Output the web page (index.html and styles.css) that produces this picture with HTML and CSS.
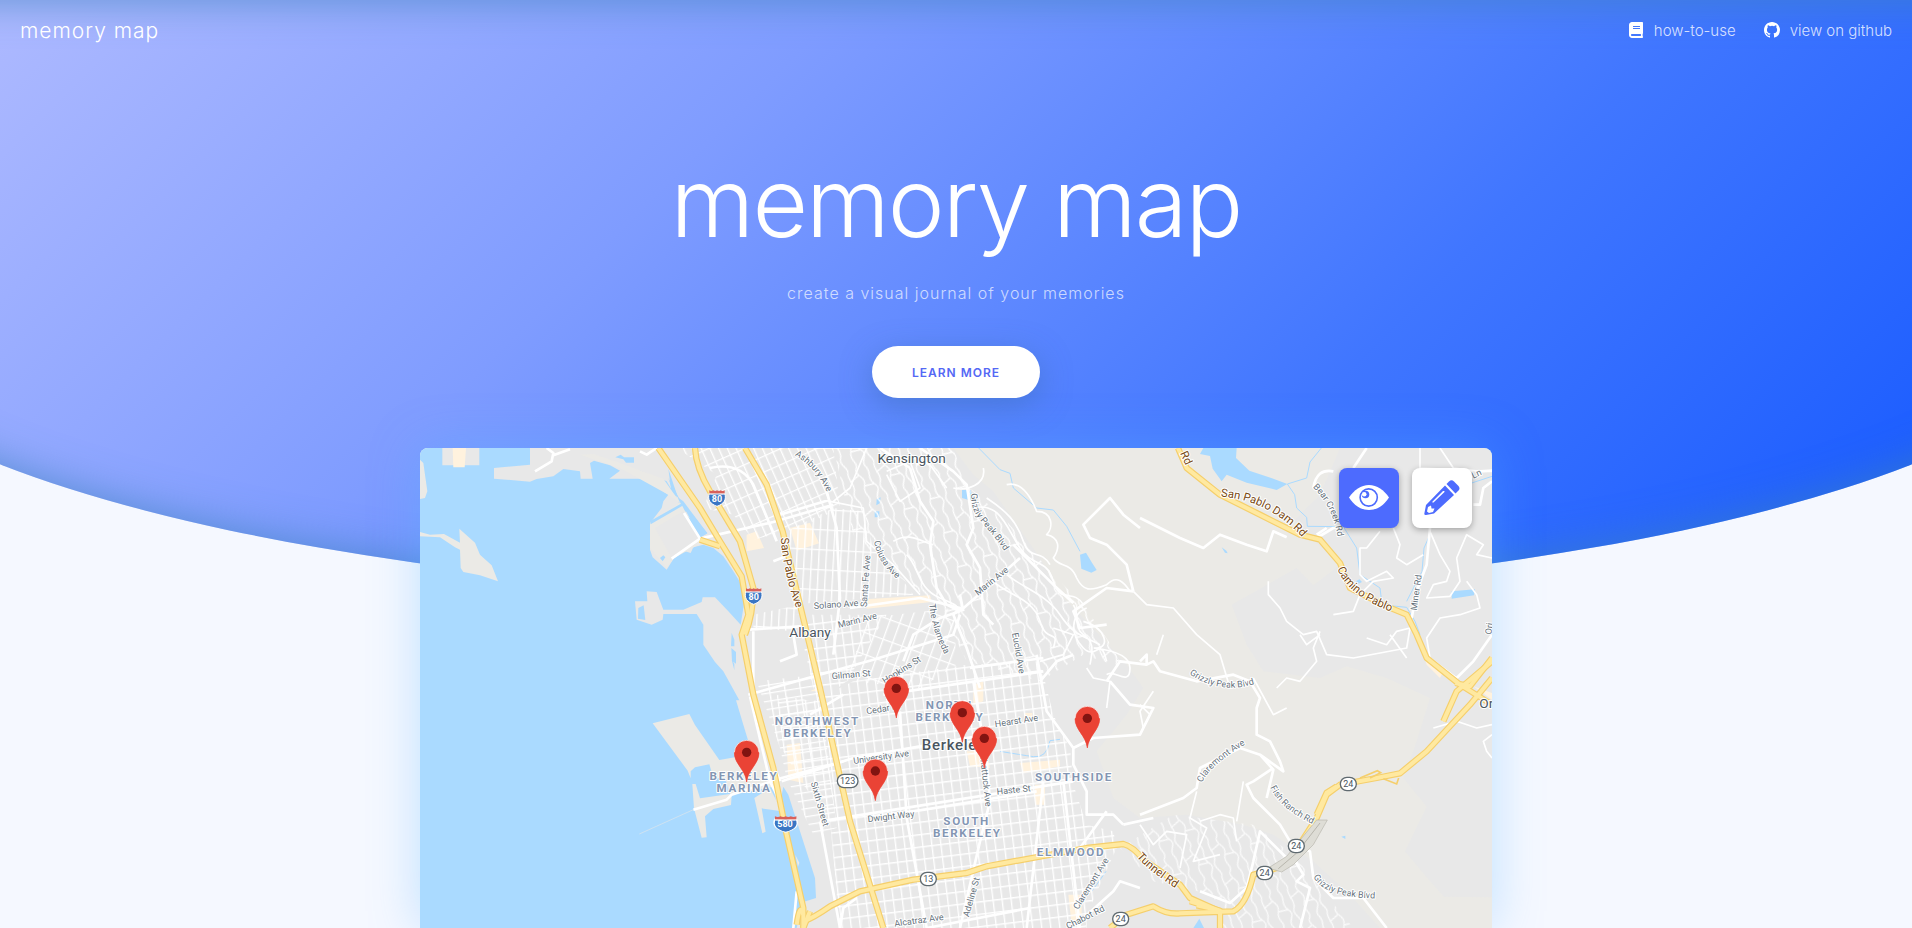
FILE: index.html
```html
<!DOCTYPE html>
<html lang="en">
<head>
<meta charset="utf-8">
<meta name="viewport" content="width=device-width, initial-scale=1">
<title>memory map</title>
<link rel="stylesheet" href="styles.css">
</head>
<body>
<div class="page">
  <div class="backdrop"></div>
  <header class="nav">
    <a class="brand" href="#">memory map</a>
    <nav class="links">
      <a class="link" href="#how">
        <svg class="link-icon" viewBox="0 0 448 512" aria-hidden="true"><path fill-rule="evenodd" d="M448 360V24c0-13.300-10.700-24-24-24H96C43 0 0 43 0 96v320c0 53 43 96 96 96h328c13.300 0 24-10.700 24-24v-16c0-7.500-3.500-14.300-8.900-18.700-4.200-15.400-4.200-59.300 0-74.700 5.400-4.300 8.900-11.100 8.900-18.600zM128 134c0-3.300 2.700-6 6-6h212c3.300 0 6 2.700 6 6v20c0 3.300-2.700 6-6 6H134c-3.300 0-6-2.700-6-6v-20zm0 64c0-3.300 2.700-6 6-6h212c3.300 0 6 2.700 6 6v20c0 3.300-2.700 6-6 6H134c-3.300 0-6-2.700-6-6v-20zm253.400 250H96c-17.700 0-32-14.300-32-32 0-17.600 14.400-32 32-32h285.400c-1.900 17.100-1.900 46.900 0 64z"/></svg>
        <span>how-to-use</span>
      </a>
      <a class="link" href="#github">
        <svg class="link-icon" viewBox="0 0 16 16" aria-hidden="true"><path d="M8 0C3.580 0 0 3.580 0 8c0 3.540 2.290 6.530 5.470 7.590.4.070.55-.17.55-.38 0-.19-.01-.82-.01-1.490-2.010.37-2.530-.49-2.690-.94-.09-.23-.48-.94-.82-1.130-.28-.15-.68-.52-.01-.53.63-.01 1.080.58 1.230.82.72 1.210 1.870.87 2.330.66.070-.52.28-.87.51-1.070-1.780-.2-3.640-.89-3.640-3.950 0-.87.31-1.590.82-2.150-.08-.2-.36-1.020.08-2.120 0 0 .67-.21 2.200.82a7.600 7.600 0 0 1 4 0c1.530-1.040 2.200-.82 2.200-.82.44 1.100.16 1.920.08 2.120.51.56.82 1.270.82 2.150 0 3.070-1.870 3.750-3.650 3.950.29.25.54.73.54 1.480 0 1.070-.01 1.930-.01 2.200 0 .21.15.46.55.38A8 8 0 0 0 16 8c0-4.420-3.580-8-8-8z"/></svg>
        <span>view on github</span>
      </a>
    </nav>
  </header>
  <section class="intro">
    <h1 class="title">memory map</h1>
    <p class="tagline">create a visual journal of your memories</p>
    <button class="more" type="button">LEARN MORE</button>
  </section>
  <main class="map-card">
    <svg class="map" viewBox="0 0 3216 1440" preserveAspectRatio="xMidYMin slice" aria-label="Map of Berkeley">
      <defs>
        <pattern id="flats" width="27" height="37" patternUnits="userSpaceOnUse" patternTransform="rotate(-7)"><path class="st" d="M0 2H27M2 0V37"/></pattern>
        <pattern id="flats2" width="46" height="24" patternUnits="userSpaceOnUse" patternTransform="rotate(-9)"><path class="st" d="M0 2H46M2 0V24"/></pattern>
        <pattern id="slant" width="24" height="44" patternUnits="userSpaceOnUse" patternTransform="rotate(-24)"><path class="st" d="M0 2H24M2 0V44"/></pattern>
        <pattern id="albany" width="22" height="60" patternUnits="userSpaceOnUse" patternTransform="rotate(3)"><path class="st" d="M0 2H22M2 0V60"/></pattern>
        <pattern id="fan" width="30" height="62" patternUnits="userSpaceOnUse" patternTransform="rotate(20)"><path class="st" d="M0 2H30M2 0V62"/></pattern>
        <pattern id="wave" width="84" height="110" patternUnits="userSpaceOnUse" patternTransform="rotate(-22)"><path class="st" d="M12 0C2 18 34 30 18 55S30 92 12 110M42 0C56 24 30 36 48 60S34 88 42 110M70 0C60 20 80 44 66 62S78 94 70 110M18 55L48 60M66 30L84 24M0 24L12 20"/></pattern>
        <g id="pin"><path d="M0 4C-4-34-37-50-37-84a37 37 0 0 1 74 0C37-50 4-34 0 4z" fill="#ea4335" stroke="#fff" stroke-width="2"/><path d="M0 4C-4-34-37-50-37-84h74C37-50 4-34 0 4z" fill="#ea4335" stroke="#ea4335" stroke-width="2"/><circle cy="-85" r="14" fill="#811411"/></g>
        <g id="shield"><path d="M-23-15C-14-9-7-15 0-17c7 2 14 8 23 2C30 7 19 18 0 25-19 18-30 7-23-15z" fill="#3a76c4" stroke="#fff" stroke-width="3"/><path d="M-23-23q6 4 12 0q6 4 11 0q6 4 11 0q6 4 12 0v10h-46z" fill="#d8605a"/><path d="M-24-12h48" stroke="#fff" stroke-width="3"/></g>
        <path id="t-ashbury" d="M1124 22Q1190 60 1222 135"/>
        <path id="t-sp" d="M1082 270Q1092 400 1152 540"/>
        <path id="t-colusa" d="M1362 280Q1372 345 1440 400"/>
        <path id="t-alameda" d="M1528 468Q1535 555 1586 640"/>
        <path id="t-griz1" d="M1653 136C1655 220 1690 210 1760 320"/>
        <path id="t-dam" d="M2402 146Q2550 156 2656 278"/>
        <path id="t-bear" d="M2678 118Q2740 175 2754 275"/>
        <path id="t-camino" d="M2752 362Q2785 450 2940 500"/>
        <path id="t-griz2" d="M2308 678Q2400 742 2510 706"/>
        <path id="t-clare" d="M2346 1004Q2370 950 2490 880"/>
        <path id="t-fish" d="M2551 1018Q2580 1085 2690 1134"/>
        <path id="t-griz3" d="M2680 1286Q2710 1350 2880 1352"/>
        <path id="t-tunnel" d="M2150 1226Q2185 1268 2280 1330"/>
        <path id="t-sixth" d="M1172 1004L1215 1155"/>
      </defs>

      <rect width="3216" height="1440" fill="#e8e8e8"/>
      <g class="hill">
        <path d="M1600 0L1660 80L1720 130L1860 330L1920 440L2000 520L2120 650L2170 720L2120 800L2030 910L2080 1050L2160 1110L2300 1100L2470 1130L2560 1160L2680 1240L2790 1340L2880 1440H3216V1348L3072 1346L3030 1300L2955 1210L3020 1076L2950 990L2990 880L3030 750L2900 690L2780 655L2700 690L2530 670L2480 590L2435 470L2630 360L2680 412L2760 350L2620 220L2700 140L2760 0z"/>
      </g>

      <g class="water">
        <path d="M0 0H330V50L222 60V92L330 101L350 93L400 85L430 63L480 70L482 92H518L510 45L522 38L570 52L600 68L568 92H665L700 110L745 140L730 160L725 180L690 226V305L698 328L740 365L762 330L790 308L812 315L820 298L850 290L880 300L910 325L940 370L965 410L975 450L962 530L925 490L885 448H848L845 462L790 485H730L710 432L680 430L682 460L645 460L650 515L695 530L728 515L730 498H830L850 530V590L885 642L910 670L958 757L948 757L970 830L985 880L1000 960L1060 1020L1075 1090L1090 1016L1105 1040L1140 1150L1185 1290L1188 1350L1150 1362L1130 1440H0z"/>
        <path d="M655 66L790 160L862 256L842 268L800 190L692 228L690 222L780 168L740 100zM586 28l16-8l10 8h30v16l-24 0l-8-10zM745 62l8 60l45 80l60 50l-20 10l-50-70zM935 555l8 20v20h-10zM934 600l14 12v35l-12-8zM935 635l8 12v20z"/>
        <path d="M1626 126h26l8 30h-14l-20-6zM1370 154l12-6l-3 18l-10 6zM1364 190h14v18h-14zM1980 320l18-6l18 30l14 22l-16 8l-30-12z"/>
        <path d="M2350 0H2450L2448 30L2488 68L2560 92L2602 108L2570 126L2480 104L2420 80L2405 100L2378 62L2370 24L2340 18zM2405 298l14 10l4 8l-8-2zM3095 430L3165 424L3162 442L3095 452zM2808 400l10-6l8 8l-12 6zM2320 1440l18-28l14 28zM2764 1166l12-3v10z"/>
      </g>
      <g class="stream">
        <path d="M1676 0L1740 65L1770 76L1780 120L1850 180L1900 186L1940 235L1980 310M2704 0L2670 42L2660 90L2602 108L2624 140L2630 180L2660 208L2662 235L2770 236L2810 300L2820 380L2880 420L2885 460M2880 470L2960 478L2985 520L3000 560M3216 85L3140 110M2960 460L3006 370L3012 300L3030 260M1740 910Q1800 920 1840 926T1890 878L1920 874M2058 1270L2030 1310L2015 1330"/>
      </g>

      <g class="land">
        <path fill="#e8e8e8" d="M67 0H178V52H67z"/>
        <path fill="#fff2de" d="M98 0h40l-4 58h-34z"/>
        <path d="M0 35L10 45L22 130L15 150L0 153zM0 252L30 260L72 258L120 284L118 242L165 284L180 320L215 352L234 400L180 382L130 372L122 360L120 305L105 298L60 268L0 265z"/>
        <path d="M698 826L808 798L825 831L898 936L1000 918L1040 960L1060 1016L935 1041L933 1071L880 1083L855 1105L860 1168L845 1169L822 1081L817 1008H827L840 1051L930 1038L915 990L880 990L868 949L825 958L812 970V991L803 968zM1003 1050L1050 1020L1085 1090L1025 1081L1037 1151L1027 1156z"/>
        <path d="M1126 1220l12 24l-4 12z"/>
        <path d="M480 20L600 60L745 140L780 164L690 222V300L740 360L762 330L845 285L785 170L730 92L600 45L520 18z"/>
      </g>
      <path class="water" d="M655 480l16-8l5 44l-22-4zM690 220L788 164L790 172L692 229zM720 330l10-8l6 6l-8 12zM745 90L758 130L800 180L862 256L840 268L785 165z"/>
      <path fill="#e8e8e8" d="M705 240L790 190L840 268L755 330z"/>

      <g class="sand">
        <path d="M1110 240L1170 224L1197 286L1130 308zM980 260l30-10l22 50l-52 10zM1335 454L1530 442L1535 462L1340 482zM1660 710l30-10v60l-30 10zM1100 890l40-5l10 120l-45-10zM1640 910h60l10 50l-60-5zM1800 945l120-10v20l-110 20zM1845 1010h30v60h-30zM1945 1340h40v90h-30zM3010 618L3070 670L3060 690L3020 650zM3160 715l56 20v20zM1170 730h30l10-20zM1815 795h22v12h-22z"/>
      </g>

      <g>
        <path fill="url(#slant)" d="M770 0H1240L1260 180L1140 240L1000 275L940 200L850 180L890 80z"/>
        <path fill="url(#albany)" d="M1100 250L1240 180L1330 190L1360 300L1450 400L1480 440L1110 470zM1000 500L1140 470L1120 550L1000 540z"/>
        <path fill="url(#flats)" d="M1130 500L1400 500L1280 700L1200 760L1180 720z"/>
        <path fill="url(#fan)" d="M1340 510L1600 480L1610 650L1500 720L1280 700z"/>
        <path fill="url(#flats)" d="M1180 760L1300 700L1640 650L1860 640L1900 800L1950 900L1960 1010L2000 1130L2080 1150L2090 1200L2000 1400V1440H1260L1230 1120L1150 1010L1090 910L1070 740z"/>
        <path fill="url(#flats2)" d="M1010 700L1190 680L1230 960L1250 1140L1180 1160L1100 990L1080 900z"/>
        <path fill="url(#wave)" d="M1240 0H1600L1640 110L1760 220L1900 380L1990 470L2080 600L2110 660L1990 620L1860 700L1640 640L1560 480L1430 380L1300 260z"/>
        <path fill="url(#wave)" opacity=".8" d="M2100 1200L2260 1100L2500 1130L2620 1220L2800 1440H2400L2380 1340L2200 1300z"/>
      </g>

      <g class="minor">
        <path d="M1760 110C1800 100 1830 140 1850 190C1900 190 1900 240 1880 260C1920 270 1920 300 1900 330C1920 360 1950 340 1970 390C1990 430 2010 430 2060 410C2090 380 2110 400 2130 430M1690 60C1700 110 1640 130 1600 120M2140 430L2180 470L2260 480L2330 560L2400 620L2430 720M2545 400V440L2580 480L2600 520L2650 560L2690 550L2720 620L2800 630L2960 600L2970 540L2930 550L2900 590L2840 570"/>
        <path d="M2880 250L2840 300L2820 300V380L2840 400L2900 370L2920 390L2860 400L2820 440L2800 490L2740 500M3030 250L3060 320L3090 370L3080 400L3040 410L3020 450L3090 445L3120 400L3110 330L3140 260L3190 290L3170 320L3216 330M3140 400L3170 440L3180 480L3120 500L3060 510L3020 570L3030 630L3110 690M2700 550L2680 600L2690 640L2640 700L2600 690L2570 720M2960 630L2910 560M2700 560L2660 590L2640 560M2920 240L2940 290L2930 330L2960 350L3010 320M3060 0L3100 60L3180 70M3000 0V60L3216 70"/>
        <path d="M1990 520C2060 540 2070 600 2030 600S2130 600 2130 660S2080 660 2060 680M2160 770L2190 800L2160 860M2000 480C1950 500 1950 560 1990 600S2040 560 2060 640M1860 640L1930 620L1960 560L1900 540M2060 780L2070 700L2020 690L2000 660"/>
        <path d="M1660 180C1740 160 1760 240 1800 300S1880 330 1900 400S1960 420 1990 470M1700 150C1760 190 1790 220 1810 280S1860 300 1890 350M1460 320C1500 360 1490 420 1560 450S1600 470 1620 490M1420 280C1470 250 1500 280 1540 290M1720 400C1760 440 1840 450 1860 520S1920 540 1900 600M1760 380C1810 420 1880 440 1920 500S1980 560 2040 590M1960 470C1980 500 1960 540 1990 560S2020 600 2010 650"/>
        <path d="M2330 1030L2310 1110L2360 1140L2320 1240L2400 1220M2340 1120L2400 1100L2440 1110L2450 1180M2450 1120L2470 1000M2160 1130L2200 1190L2240 1150L2300 1160L2280 1260M2600 780L2560 800L2500 690M3040 840L3110 820L3170 840L3216 830M3216 860L3190 880L3200 910L3216 930"/>
        <path d="M1180 0L1340 0L1290 120L1240 160M1230 160L1330 180L1340 280L1420 350L1500 440M1580 120L1530 50L1480 30M1400 70L1470 40L1500 120L1440 160L1400 80"/>
        <path d="M2200 730L2160 790L2170 840M2230 560L2210 620"/>
      </g>
      <g class="road">
        <path d="M345 70L395 40L400 15L380 0M400 22L450 4M660 10L680 20L710 0M755 332L840 272L1060 222L1240 170M792 195L840 272M870 60Q960 40 1000 110L1070 280M1470 60L1500 160L1540 220L1530 290L1550 420L1580 470L1620 490M1220 130L1250 240L1260 450L1240 620M1080 200L1230 155M1060 340L1110 320M1380 0L1470 60M1500 0L1600 70L1640 110L1660 240L1640 290L1680 360L1690 500L1720 530M1620 490L1800 330M1780 290L1900 410L1960 465M1290 480L1500 450L1620 480L1600 500L1640 600L1680 720"/>
        <path d="M985 545L1140 535M985 740L1360 635L1600 560L1620 500M1450 640L1480 560L1560 510L1620 490M1000 550L1000 740L1040 900L1080 1000M1085 1000L1300 930L1700 860M1200 1120L1960 1000M1080 640L1130 620L1120 560M1440 790L1460 1110L1520 1440M1270 740L1170 800M1200 1120L1260 1440M1660 700L1700 940L1710 1060L1680 1180L1620 1440M1870 1000L1820 1440M1930 1000L1980 1440M1650 660L1870 630M1360 1110L1850 1030M1390 740L1870 670M1850 620L1880 790L1960 900V950L2000 1030L2000 1100L2080 1100L2110 1130M1960 900L2020 870L2160 860L2200 780L2130 770L2070 700M1980 1200L2060 1090"/>
        <path d="M2160 1100L2290 1050L2330 1020L2340 960L2460 900L2520 920L2590 970L2580 940L2550 880L2510 860V780L2520 750L2490 700L2440 680L2330 700L2220 670L2200 640L2180 650V620L2160 640M2520 920L2560 965L2540 1050M2560 960L2500 1000L2480 1010L2500 1050L2580 1130L2610 1180L2670 1210L2680 1290L2740 1350L2830 1350L2900 1440M2620 1230L2650 1280L2630 1300L2670 1320L2640 1440M2110 1130L2200 1110"/>
        <path d="M2600 268L2560 250L2540 310L2480 290L2400 260L2350 300L2280 270L2160 210M2160 240L2110 200L2070 150L1990 230L2010 270L2060 290L2120 350L2140 430M2690 270L2740 240L2760 240M2690 260L2720 240M2680 120Q2690 60 2740 70M2800 60L2840 0M3030 240L3020 350L2990 430L2975 510M3216 560L3160 640L3110 690M3216 68L3180 70M3216 100L3190 120L3180 170L3160 170M2060 530L1980 540L1960 490L2060 420L2140 430M1960 620L1910 640L1860 700M2060 700L2100 640L2180 650"/>
        <path d="M820 1085L920 1055L935 1040L1085 990L1270 940M990 745L1050 1000L1075 1050M1120 1440L1130 1330M1620 440L1630 490M2340 1330L2430 1365L2480 1320L2500 1240L2520 1150L2600 1230M1260 1440L1270 1380L1310 1350M1520 1440L1830 1380M2160 1320L2100 1300L2080 1330L1980 1420"/>
      </g>
      <path d="M658 1158L820 1085" stroke="#dfe6ea" stroke-width="2"/>

      <g class="hw-edge">
        <path id="h1" d="M715 0L840 180L900 280L965 385L985 500L965 560L1000 740L1060 960L1100 1160L1150 1380L1150 1440"/>
        <path id="h2" d="M825 0Q828 60 870 130L960 280L1000 420Q1000 500 975 560"/>
        <path id="h3" d="M975 0L1040 110L1088 250L1140 470L1200 720L1290 1120L1390 1440"/>
        <path id="h4" d="M1150 1420Q1180 1410 1230 1375L1320 1330L1480 1295L1640 1275L1700 1255L2000 1200L2110 1188Q2140 1196 2170 1235L2280 1310L2310 1350L2400 1390"/>
        <path id="h5" d="M2070 1440L2120 1400L2200 1375Q2240 1400 2280 1396L2440 1390Q2480 1370 2500 1280L2540 1270L2600 1250L2690 1110L2720 1040L2760 1010L2870 990L2940 976L3020 910L3150 770L3216 690M3070 820L3110 730L3216 640M2400 1396V1440"/>
        <path id="h6" d="M2274 0L2300 60L2400 140L2520 200L2640 260L2700 275L2760 345L2790 420L2900 475L2960 500L2990 560L3020 630L3120 710L3216 770M3106 705L3150 715L3216 630M840 275L900 295"/>
        <path id="h7" d="M1150 1440L1170 1390M1150 1400Q1140 1360 1130 1430M2310 1360L2400 1388L2330 1372M2690 1100L2720 1034L2750 1015"/>
      </g>
      <g class="hw-fill">
        <use href="#h1"/><use href="#h2"/><use href="#h3"/><use href="#h4"/><use href="#h5"/><use href="#h6"/><use href="#h7"/>
      </g>
      <path class="ramp" d="M2820 990L2872 968L2882 974L2850 990M2890 992L2930 1008L2936 990"/>
      <path d="M2545 1260L2600 1225L2690 1116L2722 1116L2680 1190L2620 1250L2585 1272z" fill="#deddd6" stroke="#b8b6ad" stroke-width="2"/>
      <path d="M2575 1262L2630 1215L2700 1125" stroke="#b8b6ad" stroke-width="3" fill="none"/>

      <g class="town">
        <text x="1475" y="46">Kensington</text>
        <text x="1170" y="567">Albany</text>
        <text class="edge" x="3178" y="780">Or</text>
        <text class="city" x="1600" y="907">Berkeley</text>
      </g>
      <g class="area">
        <text x="1192" y="832">NORTHWEST</text><text x="1194" y="868">BERKELEY</text>
        <text x="1588" y="783">NORTH</text><text x="1590" y="820">BERKELEY</text>
        <text x="972" y="997">BERKELEY</text><text x="972" y="1033">MARINA</text>
        <text x="1962" y="1000">SOUTHSIDE</text>
        <text x="1640" y="1132">SOUTH</text><text x="1642" y="1168">BERKELEY</text>
        <text x="1953" y="1225">ELMWOOD</text>
      </g>
      <g class="street">
        <text><textPath href="#t-ashbury">Ashbury Ave</textPath></text>
        <text><textPath href="#t-colusa">Colusa Ave</textPath></text>
        <text><textPath href="#t-alameda">The Alameda</textPath></text>
        <text><textPath href="#t-griz1">Grizzly Peak Blvd</textPath></text>
        <text><textPath href="#t-bear">Bear Creek Rd</textPath></text>
        <text><textPath href="#t-griz2">Grizzly Peak Blvd</textPath></text>
        <text><textPath href="#t-clare">Claremont Ave</textPath></text>
        <text><textPath href="#t-fish">Fish Ranch Rd</textPath></text>
        <text><textPath href="#t-griz3">Grizzly Peak Blvd</textPath></text>
        <text><textPath href="#t-sixth">Sixth Street</textPath></text>
        <text transform="translate(1182 483) rotate(-4)">Solano Ave</text>
        <text transform="translate(1256 540) rotate(-14)">Marin Ave</text>
        <text transform="translate(1340 478) rotate(-86)">Santa Fe Ave</text>
        <text transform="translate(1674 444) rotate(-39)">Marin Ave</text>
        <text transform="translate(1776 556) rotate(80)">Euclid Ave</text>
        <text transform="translate(1236 694) rotate(-5)">Gilman St</text>
        <text transform="translate(1394 708) rotate(-32)">Hopkins St</text>
        <text transform="translate(1340 799) rotate(-9)">Cedar St</text>
        <text transform="translate(1726 838) rotate(-9)">Hearst Ave</text>
        <text transform="translate(1301 948) rotate(-8)">University Ave</text>
        <text transform="translate(1680 920) rotate(84)">Shattuck Ave</text>
        <text transform="translate(1731 1040) rotate(-6)">Haste St</text>
        <text transform="translate(1344 1123) rotate(-7)">Dwight Way</text>
        <text transform="translate(1424 1436) rotate(-8)">Alcatraz Ave</text>
        <text transform="translate(1646 1408) rotate(-74)">Adeline St</text>
        <text transform="translate(1974 1386) rotate(-58)">Claremont Ave</text>
        <text transform="translate(1944 1444) rotate(-27)">Chabot Rd</text>
        <text transform="translate(2990 488) rotate(-82)">Miner Rd</text>
        <text transform="translate(3160 92) rotate(-25)">Ln</text>
        <text transform="translate(3214 560) rotate(-82)">Ori</text>
      </g>
      <g class="route">
        <text><textPath href="#t-sp">San Pablo Ave</textPath></text>
        <text><textPath href="#t-dam">San Pablo Dam Rd</textPath></text>
        <text><textPath href="#t-camino">Camino Pablo</textPath></text>
        <text><textPath href="#t-tunnel">Tunnel Rd</textPath></text>
        <text transform="translate(2280 16) rotate(65)">Rd</text>
      </g>
      <g class="badge">
        <use href="#shield" x="891" y="150"/><text x="891" y="162">80</text>
        <use href="#shield" x="1001" y="444"/><text x="1001" y="456">80</text>
        <g transform="translate(1097 1128) scale(1.400 1)"><use href="#shield"/></g><text x="1095" y="1138">580</text>
      </g>
      <g class="oval">
        <rect x="1252" y="979" width="62" height="40" rx="20"/><text x="1283" y="1009">123</text>
        <rect x="1501" y="1273" width="48" height="40" rx="20"/><text x="1525" y="1303">13</text>
        <rect x="2078" y="1393" width="48" height="40" rx="20"/><text x="2102" y="1423">24</text>
        <rect x="2761" y="988" width="48" height="40" rx="20"/><text x="2785" y="1018">24</text>
        <rect x="2605" y="1174" width="48" height="40" rx="20"/><text x="2629" y="1204">24</text>
        <rect x="2510" y="1255" width="48" height="40" rx="20"/><text x="2534" y="1285">24</text>
      </g>
      <use href="#pin" x="1429" y="806"/>
      <use href="#pin" x="1627" y="879"/>
      <use href="#pin" x="2002" y="896"/>
      <use href="#pin" x="1693" y="956"/>
      <use href="#pin" x="980" y="998"/>
      <use href="#pin" x="1366" y="1054"/>
    </svg>
    <div class="tools">
      <button class="tool tool-active" type="button" aria-label="View">
        <svg class="tool-icon" viewBox="0 0 40 40" aria-hidden="true"><path fill="#fff" d="M0 19.500C5 12 12 7 20 7s15 5 20 12.500c-5 8-12 12.500-20 12.500S5 27.500 0 19.500z"/><circle cx="19.700" cy="19.500" r="8.600" fill="#fff" stroke="#4d6bfe" stroke-width="1.600"/><circle cx="16.500" cy="16.500" r="3.800" fill="#4d6bfe"/><circle cx="15.200" cy="16.200" r="2.300" fill="#fff"/></svg>
      </button>
      <button class="tool" type="button" aria-label="Edit">
        <svg class="tool-icon" viewBox="0 0 40 40" aria-hidden="true"><g fill="#4d6bfe"><path d="M27 3.500q2.500-2.500 5 0l4.500 4.500q2 2.500 0 4.500L33.500 15.500L24.500 6z"/><path fill-rule="evenodd" d="M23 7.500L32 17L12 35.500L4 37q-2 .3-1.600-1.700L4 27zM21 13L10.500 23.500q-.6 1.400 1 1L22.500 14q.6-1.400-1.500-1zM6 29L5 33.500L7 35L11 34L12.500 30.500L9.500 30.500L9 27.500z"/></g></svg>
      </button>
    </div>
  </main>
</div>
</body>
</html>
```
FILE: styles.css
```css
* { box-sizing: border-box; }
body {
  margin: 0;
  background: #f5f8ff;
  color: #fff;
  font-family: Inter, "Open Sans", sans-serif;
}
.page {
  position: relative;
  min-height: 100vh;
  display: flex;
  flex-direction: column;
  overflow: hidden;
}
.backdrop {
  position: absolute;
  top: 0;
  left: -10%;
  width: 120%;
  height: 598px;
  border-radius: 0 0 50% 50%;
  background: linear-gradient(135deg, #b8c0ff 0%, #7f9cff 36%, #4076ff 66%, #0c52ff 100%);
  box-shadow: inset 0 0 40px rgba(60, 130, 190, .7);
}
.nav {
  position: relative;
  display: flex;
  justify-content: space-between;
  align-items: center;
  height: 60px;
  padding: 0 20px;
}
.brand {
  color: #fff;
  font-size: 21px;
  font-weight: 300;
  letter-spacing: 1px;
  text-decoration: none;
}
.links { display: flex; gap: 28px; }
.link {
  display: flex;
  align-items: center;
  gap: 10px;
  color: rgba(255, 255, 255, .8);
  font-size: 15px;
  font-weight: 300;
  text-decoration: none;
}
.link-icon { width: 16px; height: 16px; fill: #fff; }
.intro {
  position: relative;
  display: flex;
  flex-direction: column;
  align-items: center;
  padding: 92px 20px 50px;
}
.title {
  margin: 0;
  font-size: 96px;
  font-weight: 300;
  line-height: 100px;
  letter-spacing: -2px;
}
.tagline {
  margin: 29px 0 41px;
  color: rgba(255, 255, 255, .7);
  font-size: 16px;
  font-weight: 300;
  line-height: 24px;
  letter-spacing: 1px;
}
.more {
  height: 52px;
  padding: 0 40px;
  border: 0;
  border-radius: 26px;
  background: #fff;
  color: #5468f5;
  font: 600 12px Inter, sans-serif;
  letter-spacing: 1px;
  box-shadow: 0 8px 30px rgba(60, 110, 180, .5);
}
.map-card {
  position: relative;
  z-index: 1;
  flex: 1;
  width: 90%;
  max-width: 1072px;
  min-height: 480px;
  margin: 0 auto;
  border-radius: 8px 8px 0 0;
  overflow: hidden;
  background: #aadaff;
  box-shadow: 0 0 50px rgba(90, 180, 255, .35);
}
.map {
  position: absolute;
  inset: 0;
  width: 100%;
  height: 100%;
  font-family: Roboto, sans-serif;
}
.tools {
  position: absolute;
  top: 20px;
  right: 20px;
  display: flex;
  gap: 13px;
}
.tool {
  width: 60px;
  height: 60px;
  padding: 10px;
  border: 0;
  border-radius: 8px;
  background: #fff;
  box-shadow: 0 2px 6px rgba(0, 0, 0, .3);
}
.tool-active { background: #4d6bfe; }
.tool-icon { display: block; width: 40px; height: 40px; }

.st { fill: none; stroke: #fff; stroke-width: 4; }
.hill, .land { fill: #ebeae6; }
.water { fill: #aadaff; }
.sand { fill: #fff2de; }
.stream { fill: none; stroke: #aadaff; stroke-width: 3; }
.minor, .road { fill: none; stroke: #fff; stroke-linejoin: round; }
.minor { stroke-width: 5; }
.road { stroke-width: 8; }
.hw-edge { fill: none; stroke: #f5cf6c; stroke-width: 19; stroke-linejoin: round; }
.hw-fill { fill: none; stroke: #ffe9a0; stroke-width: 12; stroke-linejoin: round; }
.ramp { fill: none; stroke: #f5cf6c; stroke-width: 5; }
.map text { paint-order: stroke; stroke: #fff; stroke-width: 6; stroke-linejoin: round; }
.town { fill: #4a5560; font-size: 41px; text-anchor: middle; }
.town .edge { text-anchor: start; }
.city { font-size: 45px; font-weight: 500; letter-spacing: 2px; }
.area { fill: #8496b3; font-size: 35px; font-weight: 700; letter-spacing: 5px; text-anchor: middle; }
.street { fill: #66727c; font-size: 27px; }
.route { fill: #7a4a12; font-size: 34px; }
.badge { fill: #fff; font-size: 27px; font-weight: 700; text-anchor: middle; }
.map .badge text, .map .oval text { stroke: none; }
.oval { fill: #4a5560; font-size: 27px; text-anchor: middle; }
.oval rect { fill: #fff; stroke: #5f6a70; stroke-width: 4; }
```
